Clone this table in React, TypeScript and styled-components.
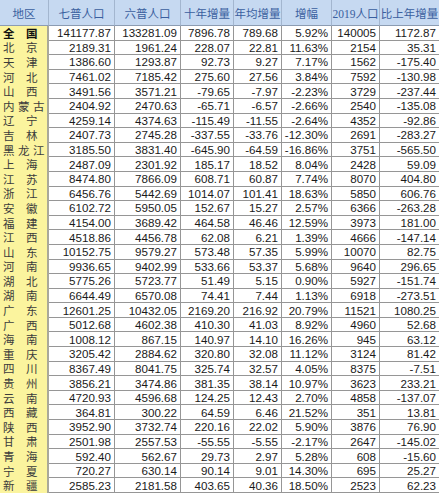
import React from 'react';
import styled, { createGlobalStyle } from 'styled-components';

type Row = [string, string, string, string, string, string, string, string];

const GlobalStyle = createGlobalStyle`
  html, body {
    margin: 0;
    padding: 0;
    background: #ffffff;
    overflow: hidden;
  }
`;

const Sheet = styled.div`
  display: grid;
  grid-template-columns: 49px 66px 66px 53px 48px 50px 48px 59px;
  grid-template-rows: 26px repeat(32, 14.6px);
  width: 439px;
  font-family: 'Liberation Sans', Arial, 'Noto Sans CJK SC', sans-serif;
  font-size: 11.6px;
  color: #1a1a1a;
`;

const HeadCell = styled.div<{ $serif?: boolean }>`
  box-sizing: border-box;
  display: flex;
  align-items: center;
  justify-content: center;
  background: #c6d9f1;
  font-family: ${(p) =>
    p.$serif
      ? "'Liberation Serif', 'Noto Sans CJK SC', serif"
      : "'Noto Sans CJK SC', sans-serif"};
  font-size: 11.5px;
  color: #3a5f9f;
  white-space: nowrap;
  overflow: hidden;
  border-right: 1px solid #a3b6cf;
  border-bottom: 1px solid #8c9cb2;

  &:nth-child(8) {
    border-right: none;
  }
`;

const RegionCell = styled.div<{ $bold?: boolean; $three?: boolean }>`
  box-sizing: border-box;
  display: flex;
  align-items: center;
  padding-left: 3px;
  background: #fbf49e;
  font-family: 'Noto Sans CJK SC', sans-serif;
  font-size: 11.5px;
  line-height: 13px;
  letter-spacing: ${(p) => (p.$three ? '3.5px' : '0')};
  font-weight: ${(p) => (p.$bold ? 700 : 400)};
  color: ${(p) => (p.$bold ? '#111' : '#3c3c3c')};
  white-space: nowrap;
  overflow: hidden;
  border-right: 2px solid #a9a89a;
`;

const NumCell = styled.div<{ $last?: boolean }>`
  box-sizing: border-box;
  display: flex;
  align-items: center;
  justify-content: flex-end;
  padding-right: 3px;
  line-height: 13px;
  white-space: nowrap;
  border-right: ${(p) => (p.$last ? 'none' : '1px solid #969696')};
  border-bottom: 1px solid #969696;
`;

const HEADERS = ['地区', '七普人口', '六普人口', '十年增量', '年均增量', '增幅', '2019人口', '比上年增量'];

const ROWS: Row[] = [
  ['全　国', '141177.87', '133281.09', '7896.78', '789.68', '5.92%', '140005', '1172.87'],
  ['北　京', '2189.31', '1961.24', '228.07', '22.81', '11.63%', '2154', '35.31'],
  ['天　津', '1386.60', '1293.87', '92.73', '9.27', '7.17%', '1562', '-175.40'],
  ['河　北', '7461.02', '7185.42', '275.60', '27.56', '3.84%', '7592', '-130.98'],
  ['山　西', '3491.56', '3571.21', '-79.65', '-7.97', '-2.23%', '3729', '-237.44'],
  ['内蒙古', '2404.92', '2470.63', '-65.71', '-6.57', '-2.66%', '2540', '-135.08'],
  ['辽　宁', '4259.14', '4374.63', '-115.49', '-11.55', '-2.64%', '4352', '-92.86'],
  ['吉　林', '2407.73', '2745.28', '-337.55', '-33.76', '-12.30%', '2691', '-283.27'],
  ['黑龙江', '3185.50', '3831.40', '-645.90', '-64.59', '-16.86%', '3751', '-565.50'],
  ['上　海', '2487.09', '2301.92', '185.17', '18.52', '8.04%', '2428', '59.09'],
  ['江　苏', '8474.80', '7866.09', '608.71', '60.87', '7.74%', '8070', '404.80'],
  ['浙　江', '6456.76', '5442.69', '1014.07', '101.41', '18.63%', '5850', '606.76'],
  ['安　徽', '6102.72', '5950.05', '152.67', '15.27', '2.57%', '6366', '-263.28'],
  ['福　建', '4154.00', '3689.42', '464.58', '46.46', '12.59%', '3973', '181.00'],
  ['江　西', '4518.86', '4456.78', '62.08', '6.21', '1.39%', '4666', '-147.14'],
  ['山　东', '10152.75', '9579.27', '573.48', '57.35', '5.99%', '10070', '82.75'],
  ['河　南', '9936.65', '9402.99', '533.66', '53.37', '5.68%', '9640', '296.65'],
  ['湖　北', '5775.26', '5723.77', '51.49', '5.15', '0.90%', '5927', '-151.74'],
  ['湖　南', '6644.49', '6570.08', '74.41', '7.44', '1.13%', '6918', '-273.51'],
  ['广　东', '12601.25', '10432.05', '2169.20', '216.92', '20.79%', '11521', '1080.25'],
  ['广　西', '5012.68', '4602.38', '410.30', '41.03', '8.92%', '4960', '52.68'],
  ['海　南', '1008.12', '867.15', '140.97', '14.10', '16.26%', '945', '63.12'],
  ['重　庆', '3205.42', '2884.62', '320.80', '32.08', '11.12%', '3124', '81.42'],
  ['四　川', '8367.49', '8041.75', '325.74', '32.57', '4.05%', '8375', '-7.51'],
  ['贵　州', '3856.21', '3474.86', '381.35', '38.14', '10.97%', '3623', '233.21'],
  ['云　南', '4720.93', '4596.68', '124.25', '12.43', '2.70%', '4858', '-137.07'],
  ['西　藏', '364.81', '300.22', '64.59', '6.46', '21.52%', '351', '13.81'],
  ['陕　西', '3952.90', '3732.74', '220.16', '22.02', '5.90%', '3876', '76.90'],
  ['甘　肃', '2501.98', '2557.53', '-55.55', '-5.55', '-2.17%', '2647', '-145.02'],
  ['青　海', '592.40', '562.67', '29.73', '2.97', '5.28%', '608', '-15.60'],
  ['宁　夏', '720.27', '630.14', '90.14', '9.01', '14.30%', '695', '25.27'],
  ['新　疆', '2585.23', '2181.58', '403.65', '40.36', '18.50%', '2523', '62.23'],
];

export default function App() {
  return (
    <>
      <GlobalStyle />
      <Sheet>
        {HEADERS.map((h) => (
          <HeadCell key={h} $serif={h.startsWith('2019')}>
            {h}
          </HeadCell>
        ))}
        {ROWS.map((row, i) => (
          <React.Fragment key={row[0]}>
            <RegionCell $bold={i === 0} $three={!row[0].includes('　')}>
              {row[0]}
            </RegionCell>
            {row.slice(1).map((v, j) => (
              <NumCell key={j} $last={j === 6}>
                {v}
              </NumCell>
            ))}
          </React.Fragment>
        ))}
      </Sheet>
    </>
  );
}
